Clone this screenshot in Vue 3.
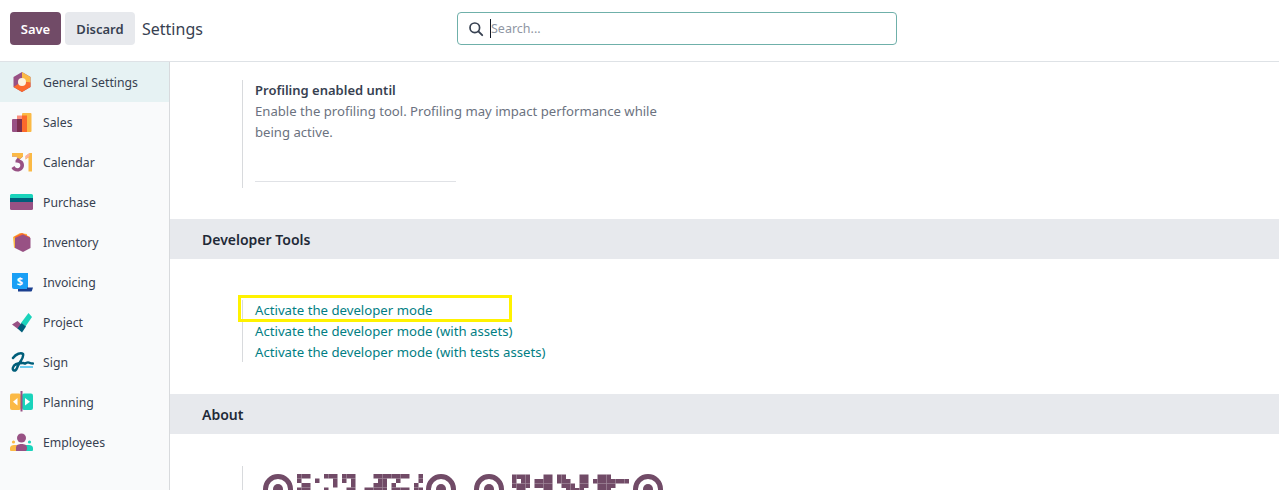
<template>
  <div class="app">
    <header class="topbar">
      <button class="btn btn--save">Save</button>
      <button class="btn btn--discard">Discard</button>
      <span class="topbar__title">Settings</span>
      <div class="search">
        <svg class="search__icon" viewBox="0 0 16 16" width="16" height="16">
          <circle cx="6.8" cy="6.8" r="4.8" fill="none" stroke="#374151" stroke-width="1.7" />
          <path d="M10.4 10.4 14.2 14.2" stroke="#374151" stroke-width="1.9" stroke-linecap="round" />
        </svg>
        <span class="search__caret"></span>
        <span class="search__placeholder">Search...</span>
      </div>
    </header>

    <div class="body">
      <aside class="sidebar">
        <div v-for="app in apps" :key="app.name" class="sidebar__item" :class="{ 'sidebar__item--active': app.active }">
          <span class="sidebar__icon">
            <svg v-if="app.icon === 'general'" viewBox="0 0 24 24" width="24" height="24">
              <path d="M12 2 20.5 7V17L12 22 3.5 17V7Z" fill="#985184" />
              <path d="M12 2 20.5 7V13L16 12 12 8Z" fill="#fbb945" />
              <path d="M3.5 17 12 22 20.5 17V12.5L16 12 12 16 8 14Z" fill="#fc6a2b" />
              <circle cx="12" cy="12" r="4" fill="#fdf3df" />
            </svg>
            <svg v-else-if="app.icon === 'sales'" viewBox="0 0 24 24" width="24" height="24">
              <rect x="2" y="9" width="10" height="13" rx="1" fill="#985184" />
              <rect x="7" y="5.5" width="10" height="16.5" fill="#fb8f7e" />
              <rect x="12" y="3" width="9.5" height="19" rx="1" fill="#fbb945" />
              <rect x="7" y="9" width="5" height="13" fill="#7c2f4f" />
              <rect x="12" y="5.5" width="5" height="16.5" fill="#fc6a2b" />
            </svg>
            <svg v-else-if="app.icon === 'calendar'" viewBox="0 0 24 24" width="24" height="24">
              <path d="M2 3H13V6.5L9.5 9.5C12 10 14 12 14 15 14 19 11 21.5 7.5 21.5 4.500 21.5 2.5 20 1.5 18L4.5 16C5.3 17.5 6.3 18.2 7.6 18.2 9.3 18.2 10.3 17 10.3 15.3 10.3 13.5 9 12.5 6.5 12.5H5.5V10.5L8.5 6.5H2Z" fill="#985184" />
              <path d="M2 3H13V6.5L10 9 6.5 7.5 7.5 6.5H2Z" fill="#fbb945" />
              <path d="M15.5 6 19.5 3H22V21.5H18.5V7.5L15.5 9.5Z" fill="#fbb945" />
              <path d="M15.5 6 19.5 3V6L15.5 9.5Z" fill="#fbb0a0" />
            </svg>
            <svg v-else-if="app.icon === 'purchase'" viewBox="0 0 24 24" width="24" height="24">
              <path d="M0 5.5A1.5 1.5 0 0 1 1.5 4H21.5A1.5 1.5 0 0 1 23 5.5V8H0Z" fill="#1ad3bb" />
              <rect x="0" y="8" width="23" height="4" fill="#005e7a" />
              <path d="M0 12H23V18.5A1.5 1.5 0 0 1 21.5 20H1.5A1.5 1.5 0 0 1 0 18.5Z" fill="#985184" />
            </svg>
            <svg v-else-if="app.icon === 'inventory'" viewBox="0 0 24 24" width="24" height="24">
              <path d="M10 3 17 4V14L4 18 3 7Z" fill="#fbb945" />
              <path d="M12 3 20 7V12L12 12 4 7Z" fill="#fc6a2b" />
              <path d="M13 4.5 20.5 8V18L13 22 5 18V8Z" fill="#985184" />
            </svg>
            <svg v-else-if="app.icon === 'invoicing'" viewBox="0 0 24 24" width="24" height="24">
              <path d="M2 3H18V19H4A2 2 0 0 1 2 17Z" fill="#1a9ff5" />
              <path d="M8 19H17V17.5H23L22 20.5A1 1 0 0 1 21 21.5H8Z" fill="#1b3f8f" />
              <text x="10" y="15" text-anchor="middle" class="sidebar__dollar">$</text>
            </svg>
            <svg v-else-if="app.icon === 'project'" viewBox="0 0 24 24" width="24" height="24">
              <path d="M2 14.5 7.5 11 12.5 15.5 8 19Z" fill="#985184" />
              <path d="M11 13 18.5 3 22 7 15.5 16.5Z" fill="#1ad3bb" />
              <path d="M7.5 18.5 11.5 13 16 16.5 12 22.5Z" fill="#005e7a" />
            </svg>
            <svg v-else-if="app.icon === 'sign'" viewBox="0 0 24 24" width="24" height="24">
              <path d="M3 8C6 4 11 2 13 4 14.5 8 9 12 7 18 5.500 22 2 21 3 17.500 4 14 9 13 13 13 15 13 14 14.500 16 13 18 12 18 12 20 13 21 13.500 22 13.500 23 13.500" fill="none" stroke="#005e7a" stroke-width="2.500" stroke-linecap="round" />
              <path d="M10 17H23" stroke="#6ccdf0" stroke-width="2" />
            </svg>
            <svg v-else-if="app.icon === 'planning'" viewBox="0 0 24 24" width="24" height="24">
              <rect x="0" y="3.5" width="11" height="16.5" rx="2" fill="#fbb945" />
              <rect x="12" y="3.5" width="11" height="16.5" rx="2" fill="#1ad3bb" />
              <rect x="10.5" y="1" width="2" height="20.5" fill="#985184" />
              <path d="M7.5 8V15.5L3 11.7Z" fill="#fff" />
              <path d="M15 8V15.5L20 11.7Z" fill="#fff" />
            </svg>
            <svg v-else viewBox="0 0 24 24" width="24" height="24">
              <path d="M0 20V18C0 16 2 15 4 15H8V21H1A1 1 0 0 1 0 20Z" fill="#fbb945" />
              <path d="M23 20V18C23 16 21 15 19 15H15V21H22A1 1 0 0 0 23 20Z" fill="#1ad3bb" />
              <path d="M6 21V17.5C6 15 8.5 14 11.5 14S17 15 17 17.5V19C17 20.5 16 21 15 21Z" fill="#985184" />
              <circle cx="11.5" cy="8" r="4.5" fill="#985184" />
              <circle cx="3.5" cy="12" r="1.6" fill="#fbb945" />
              <circle cx="19.5" cy="12" r="1.6" fill="#1ad3bb" />
            </svg>
          </span>
          <span class="sidebar__label">{{ app.name }}</span>
        </div>
      </aside>

      <main class="content">
        <div class="setting setting--profiling">
          <div class="setting__box">
            <div class="setting__title">Profiling enabled until</div>
            <div class="setting__text">Enable the profiling tool. Profiling may impact performance while being active.</div>
            <div class="setting__rule"></div>
          </div>
        </div>

        <h2 class="section">Developer Tools</h2>
        <div class="setting setting--dev">
          <div class="setting__box setting__box--links">
            <a v-for="link in links" :key="link" class="setting__link">{{ link }}</a>
          </div>
          <div class="highlight"></div>
        </div>

        <h2 class="section">About</h2>
        <div class="setting setting--about">
          <div class="setting__box setting__box--qr">
            <svg width="410" height="24" viewBox="263 466 410 24">
              <g fill="#714b67">
                <g v-for="x in finders" :key="x">
                  <circle :cx="x" cy="489" r="12.5" fill="none" stroke="#714b67" stroke-width="5" />
                  <circle :cx="x" cy="489" r="5" />
                </g>
                <rect v-for="m in modules" :key="m.x + '-' + m.y" :x="m.x" :y="m.y" width="4.5" height="4.5" />
              </g>
            </svg>
          </div>
        </div>
      </main>
    </div>
  </div>
</template>

<script setup>
const apps = [
  { name: "General Settings", icon: "general", active: true },
  { name: "Sales", icon: "sales" },
  { name: "Calendar", icon: "calendar" },
  { name: "Purchase", icon: "purchase" },
  { name: "Inventory", icon: "inventory" },
  { name: "Invoicing", icon: "invoicing" },
  { name: "Project", icon: "project" },
  { name: "Sign", icon: "sign" },
  { name: "Planning", icon: "planning" },
  { name: "Employees", icon: "employees" },
];

const links = [
  "Activate the developer mode",
  "Activate the developer mode (with assets)",
  "Activate the developer mode (with tests assets)",
];

const finders = [278, 441, 489, 648];

// top rows of the qr code, one string per row of modules
const qrLeft = [
  "1110001110111000011111111001",
  "1000100010101000001100100001",
  "0110000010001000011101000010",
  "1110001000011001111101111011",
];
const qrRight = [
  "11110001101100011001110000",
  "10110111101110011011111111",
  "11110111100111011001111000",
  "01100001100011110001110000",
];

const toModules = (rows, left, top) =>
  rows.flatMap((row, r) =>
    [...row].flatMap((bit, c) => (bit === "1" ? [{ x: left + c * 4.5, y: top + r * 4.5 }] : []))
  );

const modules = [...toModules(qrLeft, 297, 474), ...toModules(qrRight, 512, 474.5)];
</script>

<style scoped>
.app {
  width: 1279px;
  height: 490px;
  overflow: hidden;
  display: flex;
  flex-direction: column;
  font-family: "Noto Sans", sans-serif;
  font-size: 13px;
  color: #374151;
  background: #fff;
}

.topbar {
  display: flex;
  align-items: center;
  flex: 0 0 62px;
  box-sizing: border-box;
  padding: 0 0 4px 10px;
  border-bottom: 1px solid #dee2e6;
  position: relative;
}

.btn {
  height: 33px;
  border: none;
  border-radius: 4px;
  font: 600 13px "Noto Sans", sans-serif;
  padding: 0;
}

.btn--save {
  width: 51px;
  margin-right: 4px;
  background: #714b67;
  color: #fff;
}

.btn--discard {
  width: 70px;
  margin-right: 7px;
  background: #e7e9ed;
  color: #374151;
}

.topbar__title {
  font-size: 16px;
  color: #374151;
}

.search {
  position: absolute;
  left: 457px;
  top: 12px;
  width: 440px;
  height: 33px;
  box-sizing: border-box;
  border: 1px solid #6fb0aa;
  border-radius: 4px;
  display: flex;
  align-items: center;
  padding-left: 10px;
}

.search__icon {
  flex: none;
}

.search__caret {
  width: 1px;
  height: 19px;
  margin-left: 6px;
  background: #111827;
}

.search__placeholder {
  font-size: 12.5px;
  color: #8f96a3;
}

.body {
  flex: 1;
  display: flex;
  min-height: 0;
}

.sidebar {
  flex: 0 0 170px;
  box-sizing: border-box;
  background: #f9fafb;
  border-right: 1px solid #d8dadd;
}

.sidebar__item {
  height: 40px;
  display: flex;
  align-items: center;
  padding-left: 10px;
  box-sizing: border-box;
}

.sidebar__item--active {
  background: #e6f2f3;
}

.sidebar__icon {
  width: 33px;
  display: flex;
  align-items: center;
}

.sidebar__label {
  font-size: 12.25px;
  color: #374151;
}

.sidebar__dollar {
  fill: #fff;
  font: 700 11px "Noto Sans", sans-serif;
}

.content {
  flex: 1;
  min-width: 0;
}

.setting {
  padding-left: 72px;
  position: relative;
}

.setting--profiling {
  height: 157px;
  padding-top: 18px;
  box-sizing: border-box;
}

.setting--dev {
  height: 135px;
  padding-top: 41px;
  box-sizing: border-box;
}

.setting--about {
  padding-top: 32px;
}

.setting__box {
  border-left: 1px solid #d8dadd;
  padding-left: 12px;
}

.setting__box--links {
  display: flex;
  flex-direction: column;
  height: 62px;
}

.setting__box--qr {
  height: 24px;
}

.setting__box--qr svg {
  display: block;
  margin-left: 8px;
}

.setting__title {
  font-size: 13px;
  font-weight: 600;
  color: #374151;
  line-height: 21px;
}

.setting__text {
  width: 420px;
  font-size: 13.13px;
  line-height: 21px;
  color: #6b7280;
}

.setting__rule {
  width: 201px;
  height: 1px;
  margin-top: 38px;
  background: #e0e2e6;
}

.setting--profiling .setting__box {
  height: 108px;
}

.setting__link {
  font-size: 13.2px;
  line-height: 21px;
  color: #017e84;
}

.section {
  margin: 0;
  height: 40px;
  padding-left: 32px;
  display: flex;
  align-items: center;
  background: #e7e9ed;
  font-size: 14px;
  font-weight: 600;
  color: #1f2937;
}

.highlight {
  position: absolute;
  left: 68px;
  top: 36px;
  width: 274px;
  height: 27px;
  box-sizing: border-box;
  border: 3px solid #fff200;
}
</style>
